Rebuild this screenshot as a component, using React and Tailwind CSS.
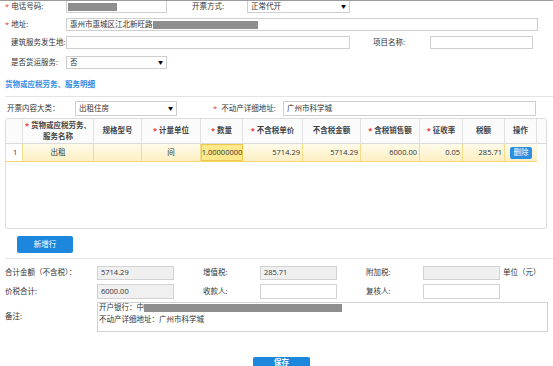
import React from "react";

const Star = () => <span className="text-[#e53935] mr-[2px]">*</span>;

const Label = ({ req, children, w = "w-[66px]" }) => (
  <div className={`${w} shrink-0 flex items-center ${req ? "pl-[5px]" : "pl-[11px]"}`}>
    {req && <Star />}
    <span>{children}</span>
  </div>
);

const Select = ({ value, className }) => (
  <div className={`flex items-center justify-between border border-[#cfcfcf] bg-white pl-[3px] pr-[3px] ${className}`}>
    <span>{value}</span>
    <span className="text-[5px] text-black">▼</span>
  </div>
);

const columns = [
  { w: "w-[17px]", label: "" },
  { w: "w-[71px]", label: "货物或应税劳务、", label2: "服务名称", req: true },
  { w: "w-[48px]", label: "规格型号" },
  { w: "w-[59px]", label: "计量单位", req: true },
  { w: "w-[42px]", label: "数量", req: true },
  { w: "w-[60px]", label: "不含税单价", req: true },
  { w: "w-[58px]", label: "不含税金额" },
  { w: "w-[59px]", label: "含税销售额", req: true },
  { w: "w-[43px]", label: "征收率", req: true },
  { w: "w-[42px]", label: "税额" },
  { w: "w-[32px]", label: "操作" },
];

const row = ["1", "出租", "", "间", "1.00000000", "5714.29", "5714.29", "6000.00", "0.05", "285.71"];

export default function App() {
  return (
    <div className="w-[553px] h-[366px] overflow-hidden bg-white text-[7.5px] leading-none text-[#333] border-t border-[#9a9a9a] font-['Open_Sans','Noto_Sans_CJK_SC',sans-serif]">
      {/* basic info */}
      <div className="flex h-[12px]">
        <Label req>电话号码:</Label>
        <div className="w-[101px] border border-t-0 border-[#cfcfcf] flex items-center pl-[1px]">
          <div className="w-[49px] h-[8px] bg-[#8e8e8e]" />
        </div>
        <div className="w-[25px]" />
        <div className="w-[55px] flex items-center">开票方式:</div>
        <Select value="正常代开" className="w-[103px] border-t-0" />
      </div>

      <div className="flex h-[13px] mt-[5px]">
        <Label req>地址:</Label>
        <div className="w-[472px] border border-[#cfcfcf] flex items-center pl-[3px]">
          <span>惠州市惠城区江北新旺路</span>
          <div className="w-[105px] h-[8px] bg-[#8e8e8e]" />
        </div>
      </div>

      <div className="flex h-[13px] mt-[5px]">
        <Label>建筑服务发生地:</Label>
        <div className="w-[284px] border border-[#cfcfcf]" />
        <div className="w-[23px]" />
        <div className="w-[57px] flex items-center">项目名称:</div>
        <div className="w-[103px] border border-[#cfcfcf]" />
      </div>

      <div className="flex h-[13px] mt-[7px]">
        <Label>是否货运服务:</Label>
        <Select value="否" className="w-[101px]" />
      </div>

      <div className="mt-[11px] h-[9px] pl-[5px] text-[#2e8ee6] font-bold flex items-center">
        货物或应税劳务、服务明细
      </div>

      <div className="mt-[7px] ml-[5px] border-t border-[#e3e3e3]" />

      {/* detail panel */}
      <div className="flex h-[15px] mt-[4px]">
        <div className="w-[75px] pl-[7px] flex items-center">开票内容大类：</div>
        <Select value="出租住房" className="w-[102px]" />
        <div className="w-[36px]" />
        <div className="w-[70px] flex items-center">
          <Star />
          <span className="ml-[2px]">不动产详细地址:</span>
        </div>
        <div className="w-[253px] border border-[#cfcfcf] flex items-center pl-[3px]">广州市科学城</div>
      </div>

      <div className="mt-[2px] ml-[5px] w-[542px] h-[111px] border border-[#dcdcdc] rounded-[3px] overflow-hidden">
        <div className="flex h-[25px] border-b border-[#dcdcdc] bg-[#fbfbfb]">
          {columns.map((c, i) => (
            <div
              key={i}
              className={`${c.w} shrink-0 flex flex-col items-center justify-center gap-[3px] border-r border-[#e2e2e2] font-bold text-[#444]`}
            >
              <div>
                {c.req && <Star />}
                {c.label}
              </div>
              {c.label2 && <div>{c.label2}</div>}
            </div>
          ))}
        </div>
        <div className="flex h-[18px] w-[531px] border-b border-[#f5d670] bg-gradient-to-b from-[#fffbea] to-[#fcefc2]">
          {row.map((v, i) => {
            const align = i === 0 ? "justify-start pl-[7px] bg-white" : i <= 4 ? "justify-center" : "justify-end pr-[2px]";
            const qty = i === 4 ? "bg-[#fde98c] border border-[#f0c84a]" : "border-r border-[#f5dc86]";
            return (
              <div key={i} className={`${columns[i].w} shrink-0 flex items-center ${align} ${qty}`}>
                {v}
              </div>
            );
          })}
          <div className="w-[32px] shrink-0 flex items-center justify-center">
            <div className="w-[22px] h-[12px] rounded-[2px] bg-[#2a8fe0] text-white flex items-center justify-center">删除</div>
          </div>
        </div>
      </div>

      <div className="mt-[7px] ml-[17px] w-[56px] h-[17px] rounded-[2px] bg-[#1c87dc] text-white flex items-center justify-center">
        新增行
      </div>

      <div className="mt-[5px] ml-[5px] border-t border-[#e3e3e3]" />

      {/* totals */}
      <div className="flex h-[14px] mt-[7px]">
        <div className="w-[97px] pl-[5px] flex items-center">合计金额（不含税）：</div>
        <div className="w-[77px] border border-[#d2d2d2] bg-[#f0f0f0] flex items-center pl-[3px]">5714.29</div>
        <div className="w-[29px]" />
        <div className="w-[57px] flex items-center">增值税:</div>
        <div className="w-[77px] border border-[#d2d2d2] bg-[#f0f0f0] flex items-center pl-[3px]">285.71</div>
        <div className="w-[29px]" />
        <div className="w-[57px] flex items-center">附加税:</div>
        <div className="w-[77px] border border-[#d2d2d2] bg-[#f0f0f0]" />
        <div className="pl-[3px] flex items-center">单位（元）</div>
      </div>

      <div className="flex h-[15px] mt-[4px]">
        <div className="w-[97px] pl-[5px] flex items-center">价税合计:</div>
        <div className="w-[77px] border border-[#d2d2d2] bg-[#f0f0f0] flex items-center pl-[3px]">6000.00</div>
        <div className="w-[29px]" />
        <div className="w-[57px] flex items-center">收款人:</div>
        <div className="w-[77px] border border-[#d2d2d2]" />
        <div className="w-[29px]" />
        <div className="w-[57px] flex items-center">复核人:</div>
        <div className="w-[77px] border border-[#d2d2d2]" />
      </div>

      <div className="flex h-[30px] mt-[3px]">
        <div className="w-[97px] pl-[5px] flex items-center">备注:</div>
        <div className="w-[451px] border border-[#d2d2d2] pl-[1px] pt-[1px] flex flex-col gap-[4px]">
          <div className="flex items-center">
            <span>开户银行：中</span>
            <div className="w-[198px] h-[8px] bg-[#8e8e8e]" />
          </div>
          <div>不动产详细地址：广州市科学城</div>
        </div>
      </div>

      <div className="mt-[25px] relative h-[11px]">
        <div className="absolute left-[225px] top-[9px] w-[105px] h-[2px] bg-[#b0b0b0]" />
        <div className="relative ml-[253px] w-[57px] h-[11px] rounded-t-[2px] bg-[#1c87dc] text-white font-bold flex items-start justify-center pt-[2px]">
          保存
        </div>
      </div>
    </div>
  );
}
